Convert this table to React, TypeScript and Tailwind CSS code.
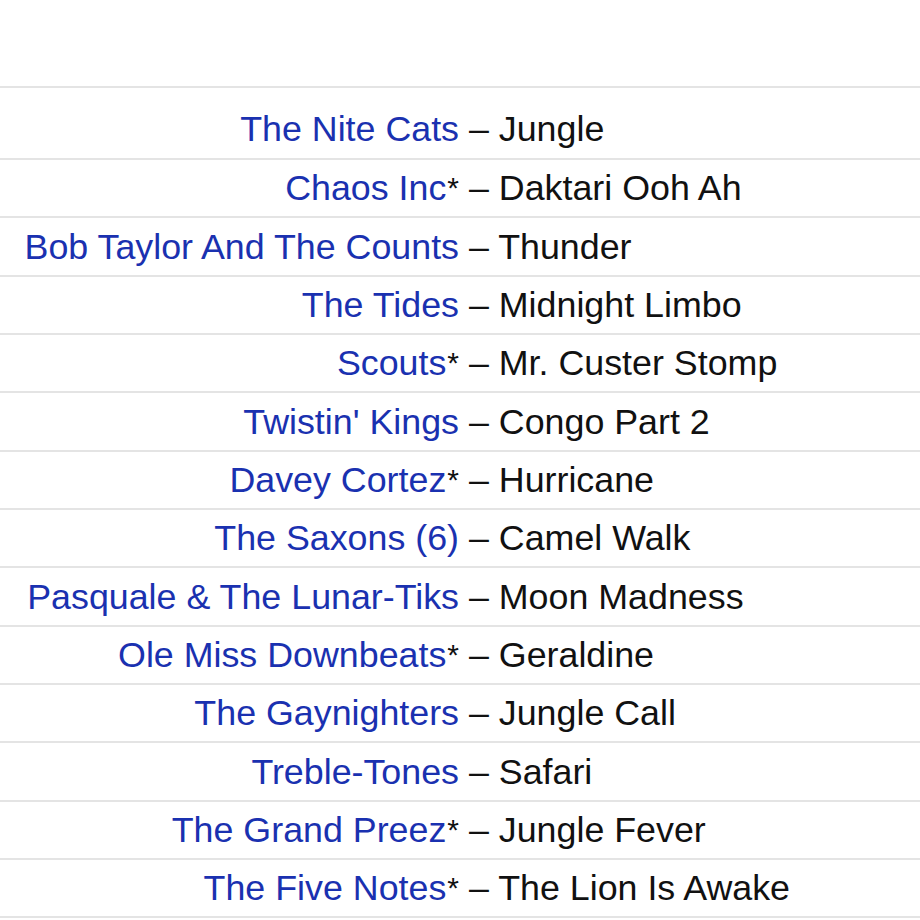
import React from "react";

const tracks = [
  { artist: "The Nite Cats", star: false, title: "Jungle" },
  { artist: "Chaos Inc", star: true, title: "Daktari Ooh Ah" },
  { artist: "Bob Taylor And The Counts", star: false, title: "Thunder" },
  { artist: "The Tides", star: false, title: "Midnight Limbo" },
  { artist: "Scouts", star: true, title: "Mr. Custer Stomp" },
  { artist: "Twistin' Kings", star: false, title: "Congo Part 2" },
  { artist: "Davey Cortez", star: true, title: "Hurricane" },
  { artist: "The Saxons (6)", star: false, title: "Camel Walk" },
  { artist: "Pasquale & The Lunar-Tiks", star: false, title: "Moon Madness" },
  { artist: "Ole Miss Downbeats", star: true, title: "Geraldine" },
  { artist: "The Gaynighters", star: false, title: "Jungle Call" },
  { artist: "Treble-Tones", star: false, title: "Safari" },
  { artist: "The Grand Preez", star: true, title: "Jungle Fever" },
  { artist: "The Five Notes", star: true, title: "The Lion Is Awake" },
];

export default function App() {
  return (
    <div className="w-[920px] h-[920px] overflow-hidden bg-white font-['Liberation_Sans',Arial,sans-serif] text-[35.8px] leading-none">
      <div className="h-[86px]" />
      <div className="border-t-2 border-[#e4e4e4]">
        {tracks.map((t, i) => (
          <div
            key={i}
            className={
              i === 0
                ? "flex items-center h-[72px] pt-[13px] border-b-2 border-[#e4e4e4]"
                : "flex items-center h-[58.33px] pt-[2px] border-b-2 border-[#e4e4e4]"
            }
          >
            <span className="w-[459px] shrink-0 text-right whitespace-nowrap">
              <span className="text-[#1a31b0]">{t.artist}</span>
              {t.star && (
                <span className="text-[#111] text-[30px] relative -top-[2px] ml-[1px]">*</span>
              )}
            </span>
            <span className="whitespace-pre text-[#111]">{" – " + t.title}</span>
          </div>
        ))}
      </div>
    </div>
  );
}
